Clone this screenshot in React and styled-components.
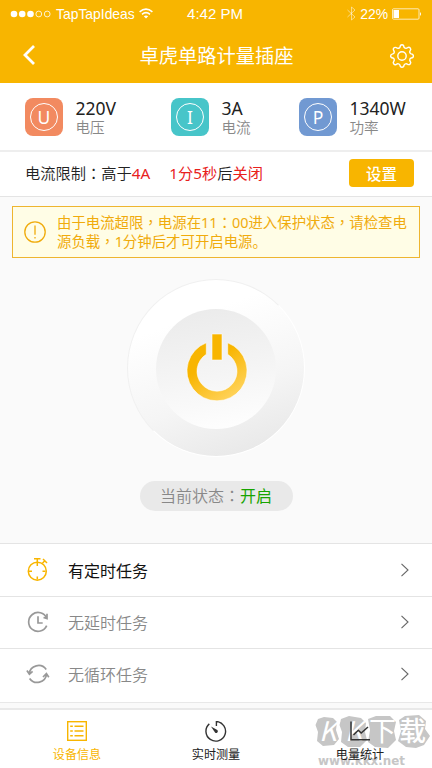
import React from 'react';
import styled, { createGlobalStyle } from 'styled-components';

const GlobalStyle = createGlobalStyle`
  * {
    box-sizing: border-box;
  }
  body {
    margin: 0;
    background: #fafafa;
    font-family: 'Noto Sans', 'Noto Sans CJK SC', sans-serif;
    font-weight: 350;
  }
`;

const Screen = styled.div`
  display: flex;
  flex-direction: column;
  width: 432px;
  height: 768px;
  overflow: hidden;
  background: #fafafa;
  white-space: nowrap;
`;

const Header = styled.header`
  height: 83px;
  background: #f8b500;
  color: #fff;
`;

const StatusBar = styled.div`
  display: grid;
  grid-template-columns: 1fr auto 1fr;
  align-items: center;
  height: 27px;
  padding: 0 10px;
  font-family: 'Liberation Sans', sans-serif;
  font-weight: 400;
`;

const Carrier = styled.div`
  display: flex;
  align-items: center;
  gap: 4px;
  font-size: 13.9px;
`;

const Clock = styled.div`
  margin-right: 2px;
  font-size: 15px;
`;

const Battery = styled.div`
  display: flex;
  align-items: center;
  justify-content: flex-end;
  gap: 4px;
  font-size: 13.9px;
`;

const TitleBar = styled.div`
  display: flex;
  align-items: center;
  justify-content: space-between;
  height: 56px;
  padding: 0 17px 0 22px;
`;

const BackButton = styled.div`
  display: flex;
  width: 22px;
`;

const SettingsButton = styled.div`
  display: flex;
  padding-top: 2px;
`;

const Title = styled.h1`
  margin: 0;
  padding-top: 1px;
  font-size: 19.3px;
  line-height: 28px;
  font-weight: 400;
`;

const Stats = styled.section`
  display: grid;
  grid-template-columns: 146px 128px 1fr;
  align-items: center;
  height: 69px;
  padding-left: 25px;
  background: #fff;
  border-bottom: 2px solid #eee;
`;

const Stat = styled.div`
  display: flex;
  align-items: center;
  gap: 12.5px;
`;

const StatBadge = styled.div`
  display: flex;
  align-items: center;
  justify-content: center;
  width: 38px;
  height: 38px;
  border-radius: 8px;
  background: ${(props) => props.$color};
`;

const StatRing = styled.div`
  display: flex;
  align-items: center;
  justify-content: center;
  width: 28px;
  height: 28px;
  border: 1.5px solid #fff;
  border-radius: 50%;
  color: #fff;
  font-size: 17.5px;
  line-height: 24px;
  font-weight: 400;
`;

const StatValue = styled.div`
  padding-top: 1px;
  color: #222;
  font-size: 17.5px;
  line-height: 20px;
  font-weight: 400;
`;

const StatName = styled.div`
  color: #888;
  font-size: 14.6px;
  line-height: 18px;
`;

const LimitRow = styled.section`
  display: flex;
  align-items: center;
  height: 45px;
  padding: 0 18px 2px 25px;
  background: #fff;
  border-bottom: 1px solid #e4e4e4;
  color: #222;
  font-size: 15.25px;
  line-height: 22px;
`;

const LimitText = styled.span`
  padding-bottom: 1px;
`;

const Alert = styled.span`
  color: #e8211d;
  font-weight: 400;
`;

const Closing = styled(LimitText)`
  flex: 1;
  margin-left: 19px;
`;

const SetButton = styled.button`
  width: 65px;
  height: 28px;
  padding: 0;
  border: 0;
  border-radius: 4px;
  background: #f8b500;
  color: #fff;
  font: 500 15.4px/27px 'Noto Sans CJK SC', sans-serif;
`;

// full-width colon and comma sit in the middle of their cell
const Mid = styled.span`
  font-family: 'Noto Sans CJK TC', sans-serif;
`;

const Notice = styled.section`
  display: flex;
  align-items: center;
  height: 52px;
  margin: 9px 12px 0;
  padding-left: 11px;
  gap: 11px;
  border: 1px solid #eeb52f;
  background: #fffde6;
  color: #f0ab0c;
  font-size: 14.42px;
  line-height: 18.5px;
  font-weight: 400;
`;

const DialArea = styled.section`
  display: flex;
  flex-direction: column;
  align-items: center;
  height: 285px;
  padding-top: 21px;
`;

const Dial = styled.div`
  display: flex;
  align-items: center;
  justify-content: center;
  width: 178px;
  height: 178px;
  margin-right: 1px;
  padding: 2px 0 0 1px;
  border: 1px solid #f0f0f0;
  border-right-color: #fff;
  border-bottom-color: #fff;
  border-radius: 50%;
  background: linear-gradient(160deg, #fff 25%, #f5f5f5 62%, #e6e6e6 96%);
`;

const DialFace = styled.div`
  display: flex;
  align-items: center;
  justify-content: center;
  width: 120px;
  height: 120px;
  padding: 0 0 2px 1px;
  border-radius: 50%;
  background: linear-gradient(170deg, #ebebeb 5%, #f5f5f5 55%, #fefefe 95%);
`;

const State = styled.div`
  width: 153px;
  height: 30px;
  margin-top: 24px;
  border-radius: 15px;
  background: #e9e9e9;
  color: #888;
  font-size: 16px;
  line-height: 29px;
  text-align: center;
`;

const On = styled.span`
  color: #17a400;
  font-weight: 400;
`;

const TaskList = styled.section`
  border-top: 1px solid #e4e4e4;
  border-bottom: 1px solid #e8e8e8;
  background: #fff;
`;

const Task = styled.div`
  display: flex;
  align-items: center;
  height: ${(props) => props.$height}px;
  padding: 0 22px ${(props) => props.$lift || 0}px 26px;
  color: ${(props) => (props.$active ? '#111' : '#888')};
  font-size: 16px;
  font-weight: ${(props) => (props.$active ? 400 : 350)};

  & + & {
    border-top: 1px solid #e4e4e4;
  }
`;

const TaskName = styled.span`
  flex: 1;
  margin-left: 18px;
`;

const TabBar = styled.nav`
  position: relative;
  display: grid;
  grid-template-columns: 154px 124px 154px;
  height: 60px;
  margin-top: 5px;
  border-top: 2px solid #e9e9e9;
  background: #fff;
`;

const Tab = styled.div`
  position: relative;
  display: flex;
  flex-direction: column;
  align-items: center;
  padding-top: 11px;
  padding-left: ${(props) => props.$shift || 0}px;
  color: ${(props) => (props.$active ? '#f8b500' : '#222')};
  font-size: 12.1px;
  line-height: 18px;
  font-weight: 400;
`;

const TabIcon = styled.div`
  height: 25px;
`;

const Watermark = styled.svg`
  position: absolute;
  left: 314px;
  top: 2px;
`;

const SignalIcon = () => (
  <svg width="42" height="8" viewBox="0 0 42 8" fill="#fff">
    <circle cx="4" cy="4" r="3.3" />
    <circle cx="12.2" cy="4" r="3.3" />
    <circle cx="20.5" cy="4" r="3.3" />
    <circle cx="28.8" cy="4" r="2.9" fill="none" stroke="#fff" strokeWidth="0.8" />
    <circle cx="37.2" cy="4" r="2.9" fill="none" stroke="#fff" strokeWidth="0.8" />
  </svg>
);

const WifiIcon = () => (
  <svg width="14" height="11" viewBox="0 0 14 11" fill="none" stroke="#fff" strokeWidth="1.6">
    <path d="M0.6 3.8Q7-1.6 13.4 3.8M3 6.3Q7 2.9 11 6.3" />
    <path d="M4.8 8.3Q7 6.5 9.2 8.3L7 10.6Z" fill="#fff" stroke="none" />
  </svg>
);

const BluetoothIcon = () => (
  <svg width="9" height="15" viewBox="0 0 9 15" fill="none" stroke="#fff" strokeOpacity="0.5">
    <path d="M0.5 4L8 11L4.5 14V1L8 4L0.5 11" />
  </svg>
);

const BatteryIcon = () => (
  <svg width="30" height="12" viewBox="0 0 30 12">
    <rect x="0.5" y="0.8" width="26.5" height="10.4" rx="1" fill="none" stroke="#fff" strokeOpacity="0.8" strokeWidth="0.9" />
    <rect x="1.5" y="2" width="5.5" height="8" fill="#fff" />
    <path d="M28 4Q30 6 28 8Z" fill="#fff" />
  </svg>
);

const BackIcon = () => (
  <svg width="14" height="20" viewBox="0 0 14 20" fill="none" stroke="#fff" strokeWidth="2.8">
    <path d="M12 1L3 10L12 19" />
  </svg>
);

const GearIcon = () => (
  <svg width="26" height="26" viewBox="0 0 26 26" fill="none" stroke="#fff" strokeWidth="1.4" strokeLinejoin="round">
    <circle cx="13" cy="13" r="4.2" />
    <path d="M11 4.2Q11.2 1.8 13 1.8T15 4.2Q15.4 5.2 16.9 5.3Q17.6 5.4 18.6 4.7Q20.1 3.8 21.2 5T21.3 7.5Q20.4 8.7 20.8 9.6Q21.2 10.7 22.2 10.9Q24.4 11.2 24.4 13T22.2 15Q21 15.2 20.8 16.4Q20.5 17.5 21.3 18.5Q22.3 19.9 21.2 21T18.6 21.3Q17.5 20.5 16.5 20.9Q15.3 21.2 15 22.2Q14.8 24.3 13 24.3T11 22.2Q10.7 21.2 9.6 20.9Q8.5 20.5 7.4 21.3Q5.9 22.2 4.8 21T4.7 18.5Q5.5 17.5 5.2 16.4Q4.9 15.2 3.8 15Q1.6 14.7 1.6 13T3.8 10.9Q4.9 10.7 5.2 9.6Q5.5 8.6 4.7 7.5Q3.7 6.1 4.8 5T7.4 4.7Q8.5 5.5 9.6 5.2Q10.7 5 11 4.2Z" />
  </svg>
);

const WarningIcon = () => (
  <svg width="22" height="22" viewBox="0 0 22 22" fill="none" stroke="#f0ab0c" strokeWidth="1.3">
    <circle cx="11" cy="11" r="10.2" />
    <path d="M11 4.5V13.7M11 16V17.6" />
  </svg>
);

const PowerIcon = () => (
  <svg width="62" height="70" viewBox="0 0 62 70">
    <defs>
      <linearGradient id="power" x1="0" y1="0" x2="0.7" y2="1">
        <stop offset="0.4" stopColor="#f8b500" />
        <stop offset="1" stopColor="#ffd35c" />
      </linearGradient>
    </defs>
    <path
      d="M20.3 9.8A30 30 0 1 0 41.7 9.8V21.3A20 20 0 1 1 20.3 21.3Z"
      fill="url(#power)"
      stroke="#fff"
      strokeOpacity="0.7"
      strokeWidth="0.8"
    />
    <rect x="26" y="1" width="10" height="26" fill="#f8b500" stroke="#fff" strokeOpacity="0.7" strokeWidth="0.8" />
  </svg>
);

const TimerIcon = () => (
  <svg width="24" height="24" viewBox="0 0 24 24" fill="none" stroke="#f8b500" strokeWidth="1.5">
    <circle cx="11.3" cy="13.2" r="9" />
    <path d="M8 0.8H14.5M11.3 1V4.5M17 1L21 5M16.2 5.5L18.8 2.8M11.3 8V5M11.3 21.5V18.5M3 13.2H6M16.5 13.2H19.5" />
  </svg>
);

const DelayIcon = () => (
  <svg width="24" height="24" viewBox="0 0 24 24" fill="none" stroke="#999" strokeWidth="1.7">
    <path d="M20.7 8.2A9.4 9.4 0 1 0 20.7 15.6M21 3.8V8.6L17.5 7.5M12 6.3V13H16.7" />
  </svg>
);

const LoopIcon = () => (
  <svg width="24" height="24" viewBox="0 0 24 24" fill="none" stroke="#999" strokeWidth="1.7">
    <path d="M20.2 7.5A9.4 9.4 0 0 0 3.2 11.8M0.9 8.6L3.4 12.3L6.6 9.3" />
    <path d="M3.6 16.4A9.4 9.4 0 0 0 20.6 12.2M17 15L20.4 11.6L22.8 15.2" />
  </svg>
);

const ArrowIcon = () => (
  <svg width="10" height="14" viewBox="0 0 10 14" fill="none" stroke="#666" strokeWidth="1.1">
    <path d="M1.5 0.8L8 7L1.5 13.2" />
  </svg>
);

const ListIcon = () => (
  <svg width="20" height="20" viewBox="0 0 20 20" fill="none" stroke="#f8b500" strokeWidth="1.4">
    <rect x="0.7" y="0.7" width="18.6" height="18.6" />
    <path d="M3.2 5.2H5.8M3.2 10H5.8M3.2 14.8H5.8M7.5 5.2H16.5M7.5 10H16.5M7.5 14.8H16.5" />
  </svg>
);

const GaugeIcon = () => (
  <svg width="22" height="22" viewBox="0 0 22 22" fill="none" stroke="#333" strokeWidth="1.4">
    <path d="M4.3 2.9A9.8 9.8 0 1 0 11.4 0.5V5" />
    <path d="M6 5.5L12.3 9.1A1.6 1.6 0 0 1 10 11.5Z" fill="#333" stroke="none" />
  </svg>
);

const ChartIcon = () => (
  <svg width="20" height="20" viewBox="0 0 20 20" fill="none" stroke="#333" strokeWidth="1.5">
    <path d="M1 0.5V18.8H20M3.5 14L8.3 9.2L11.2 12L18 6" />
  </svg>
);

const stats = [
  { letter: 'U', value: '220V', name: '电压', color: '#f28a60' },
  { letter: 'I', value: '3A', name: '电流', color: '#47c5c9' },
  { letter: 'P', value: '1340W', name: '功率', color: '#7199d2' },
];

const tasks = [
  { name: '有定时任务', icon: <TimerIcon />, active: true, height: 52 },
  { name: '无延时任务', icon: <DelayIcon />, height: 52, lift: 2 },
  { name: '无循环任务', icon: <LoopIcon />, height: 54, lift: 4 },
];

const App = () => {
  return (
    <Screen>
      <GlobalStyle />
      <Header>
        <StatusBar>
          <Carrier>
            <SignalIcon />
            TapTapIdeas
            <WifiIcon />
          </Carrier>
          <Clock>4:42 PM</Clock>
          <Battery>
            <BluetoothIcon />
            22%
            <BatteryIcon />
          </Battery>
        </StatusBar>
        <TitleBar>
          <BackButton><BackIcon /></BackButton>
          <Title>卓虎单路计量插座</Title>
          <SettingsButton><GearIcon /></SettingsButton>
        </TitleBar>
      </Header>

      <Stats>
        {stats.map((stat) => (
          <Stat key={stat.letter}>
            <StatBadge $color={stat.color}>
              <StatRing>{stat.letter}</StatRing>
            </StatBadge>
            <div>
              <StatValue>{stat.value}</StatValue>
              <StatName>{stat.name}</StatName>
            </div>
          </Stat>
        ))}
      </Stats>

      <LimitRow>
        <LimitText>电流限制<Mid>：</Mid>高于<Alert>4A</Alert></LimitText>
        <Closing><Alert>1分5秒</Alert>后<Alert>关闭</Alert></Closing>
        <SetButton>设置</SetButton>
      </LimitRow>

      <Notice>
        <WarningIcon />
        <div>
          由于电流超限<Mid>，</Mid>电源在11<Mid>：</Mid>00进入保护状态<Mid>，</Mid>请检查电
          <br />
          源负载<Mid>，</Mid>1分钟后才可开启电源。
        </div>
      </Notice>

      <DialArea>
        <Dial>
          <DialFace>
            <PowerIcon />
          </DialFace>
        </Dial>
        <State>当前状态<Mid>：</Mid><On>开启</On></State>
      </DialArea>

      <TaskList>
        {tasks.map((task) => (
          <Task key={task.name} $active={task.active} $height={task.height} $lift={task.lift}>
            {task.icon}
            <TaskName>{task.name}</TaskName>
            <ArrowIcon />
          </Task>
        ))}
      </TaskList>

      <TabBar>
        <Watermark width="118" height="56" viewBox="0 0 118 56">
          <g fill="#c6c6c6">
            <path d="M4 7L10 5L19 6L23 10L22 18L25 27L20 33L9 34L3 29L4 20L1.5 13Z" />
            <path d="M27 7L35 4L47 6L52 11L51 20L53 28L46 35L34 35L27 30L28 20L25.5 13Z" />
            <path d="M54 7L62 4L76 4L82 10L80 19L82 28L74 36L61 35L54 30L56 18Z" />
            <path d="M85 8L91 4L105 3L112 9L111 17L116 24L110 33L102 36L92 35L84 29L87 19Z" />
          </g>
          <g fill="#fff" fontFamily="'Noto Sans CJK SC', sans-serif" fontWeight="400" fontSize="27">
            <text x="5" y="29" fontStyle="italic">K</text>
            <text x="31" y="29" fontStyle="italic">K</text>
            <text x="55" y="29">下</text>
            <text x="85" y="29" fontWeight="500">载</text>
          </g>
          <text x="4" y="52.5" fill="#c6c6c6" fontFamily="'DejaVu Sans', sans-serif" fontWeight="700" fontSize="12" textLength="87" lengthAdjust="spacingAndGlyphs">
            www.kkx.net
          </text>
        </Watermark>
        <Tab $active>
          <TabIcon><ListIcon /></TabIcon>
          设备信息
        </Tab>
        <Tab>
          <TabIcon><GaugeIcon /></TabIcon>
          实时测量
        </Tab>
        <Tab $shift={10}>
          <TabIcon><ChartIcon /></TabIcon>
          电量统计
        </Tab>
      </TabBar>
    </Screen>
  );
};

export default App;
